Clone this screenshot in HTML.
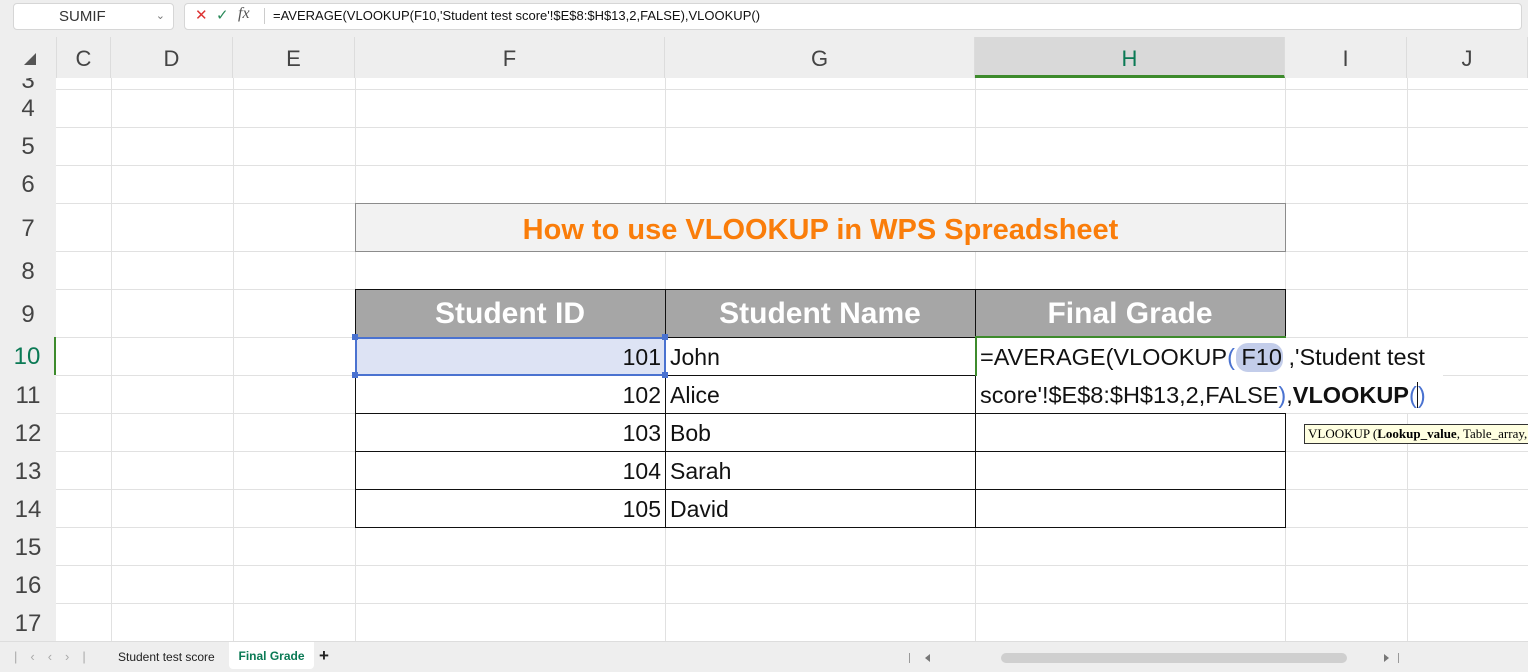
<!DOCTYPE html>
<html><head><meta charset="utf-8"><style>
*{margin:0;padding:0;box-sizing:border-box}
body{width:1528px;height:672px;overflow:hidden;background:#eeeeee;font-family:"Liberation Sans",sans-serif;position:relative}
.a{position:absolute}
.vl{position:absolute;top:78px;height:563px;width:1px;background:#e1e1e1}
.hl{position:absolute;left:56px;width:1472px;height:1px;background:#e1e1e1}
.rh{position:absolute;left:0;width:56px;text-align:center;font-size:24px;color:#444}
.ch{position:absolute;top:37px;height:41px;line-height:43px;text-align:center;font-size:22px;color:#444;border-right:1px solid #dcdcdc}
.c{position:absolute;font-size:23px;color:#111;white-space:nowrap}
</style></head><body>
<div class="a" style="left:13px;top:3px;width:161px;height:27px;background:#fff;border:1px solid #d6d6d6;border-radius:4px;font-size:15px;color:#333;line-height:25px;padding-left:45px">SUMIF<span style="position:absolute;right:8px;top:0;font-size:11px;color:#777">&#8964;</span></div>
<div class="a" style="left:184px;top:3px;width:1338px;height:27px;background:#fff;border:1px solid #d6d6d6;border-radius:4px"></div>
<div class="a" style="left:195px;top:6px;font-size:15px;color:#d33">✕</div>
<div class="a" style="left:216px;top:6px;font-size:15px;color:#2a8a5a">✓</div>
<div class="a" style="left:238px;top:5px;font-size:16px;color:#555;font-style:italic;font-family:'Liberation Serif',serif">fx</div>
<div class="a" style="left:264px;top:8px;width:1px;height:16px;background:#ccc"></div>
<div class="a" style="left:273px;top:8px;font-size:13px;color:#111">=AVERAGE(VLOOKUP(F10,'Student test score'!$E$8:$H$13,2,FALSE),VLOOKUP()</div>
<div class="a" style="left:56px;top:78px;width:1472px;height:563px;background:#fff"></div>
<div class="a" style="left:0;top:37px;width:56px;height:41px"><div style="position:absolute;left:24px;top:16px;width:0;height:0;border-left:12px solid transparent;border-bottom:12px solid #555"></div></div>
<div class="ch" style="left:56px;width:55px;border-left:1px solid #dcdcdc">C</div>
<div class="ch" style="left:111px;width:122px">D</div>
<div class="ch" style="left:233px;width:122px">E</div>
<div class="ch" style="left:355px;width:310px">F</div>
<div class="ch" style="left:665px;width:310px">G</div>
<div class="ch" style="left:975px;width:310px;background:#d9d9d9;color:#0b7a55;border-bottom:3px solid #3d8b2c">H</div>
<div class="ch" style="left:1285px;width:122px">I</div>
<div class="ch" style="left:1407px;width:121px">J</div>
<div class="vl" style="left:111px"></div><div class="vl" style="left:233px"></div><div class="vl" style="left:355px"></div><div class="vl" style="left:665px"></div><div class="vl" style="left:975px"></div><div class="vl" style="left:1285px"></div><div class="vl" style="left:1407px"></div>
<div class="hl" style="top:89px"></div><div class="hl" style="top:127px"></div><div class="hl" style="top:165px"></div><div class="hl" style="top:203px"></div><div class="hl" style="top:251px"></div><div class="hl" style="top:289px"></div><div class="hl" style="top:337px"></div><div class="hl" style="top:375px"></div><div class="hl" style="top:413px"></div><div class="hl" style="top:451px"></div><div class="hl" style="top:489px"></div><div class="hl" style="top:527px"></div><div class="hl" style="top:565px"></div><div class="hl" style="top:603px"></div><div class="hl" style="top:641px"></div>
<div class="rh" style="top:78px;height:11px;overflow:hidden;line-height:22px;font-size:24px"><span style="position:relative;top:-8px">3</span></div>
<div class="rh" style="top:89px;line-height:40px">4</div>
<div class="rh" style="top:127px;line-height:40px">5</div>
<div class="rh" style="top:165px;line-height:40px">6</div>
<div class="rh" style="top:203px;line-height:52px">7</div>
<div class="rh" style="top:251px;line-height:42px">8</div>
<div class="rh" style="top:289px;line-height:52px">9</div>
<div class="rh" style="top:337px;line-height:40px;color:#0b7a55;height:38px;border-right:2px solid #3d8b2c">10</div>
<div class="rh" style="top:375px;line-height:42px">11</div>
<div class="rh" style="top:413px;line-height:42px">12</div>
<div class="rh" style="top:451px;line-height:42px">13</div>
<div class="rh" style="top:489px;line-height:42px">14</div>
<div class="rh" style="top:527px;line-height:42px">15</div>
<div class="rh" style="top:565px;line-height:42px">16</div>
<div class="rh" style="top:603px;line-height:42px">17</div>
<div class="a" style="left:355px;top:203px;width:931px;height:49px;background:#f2f2f2;border:1px solid #8c8c8c;text-align:center;line-height:52px;font-size:29px;font-weight:bold;color:#fa7d0a">How to use VLOOKUP in WPS Spreadsheet</div>
<div class="a" style="left:355px;top:289px;width:931px;height:49px;background:#a6a6a6;border:1px solid #111"></div>
<div class="a" style="left:665px;top:289px;width:1px;height:239px;background:#111"></div>
<div class="a" style="left:975px;top:289px;width:1px;height:239px;background:#111"></div>
<div class="c" style="left:355px;top:297px;width:310px;text-align:center;color:#fff;font-weight:bold;font-size:30px">Student ID</div>
<div class="c" style="left:665px;top:297px;width:310px;text-align:center;color:#fff;font-weight:bold;font-size:30px">Student Name</div>
<div class="c" style="left:975px;top:297px;width:310px;text-align:center;color:#fff;font-weight:bold;font-size:30px">Final Grade</div>
<div class="a" style="left:355px;top:337px;width:1px;height:191px;background:#111"></div>
<div class="a" style="left:1285px;top:413px;width:1px;height:115px;background:#111"></div>
<div class="a" style="left:665px;top:375px;width:311px;height:1px;background:#111"></div>
<div class="a" style="left:355px;top:413px;width:931px;height:1px;background:#111"></div>
<div class="a" style="left:355px;top:451px;width:931px;height:1px;background:#111"></div>
<div class="a" style="left:355px;top:489px;width:931px;height:1px;background:#111"></div>
<div class="a" style="left:355px;top:527px;width:931px;height:1px;background:#111"></div>
<div class="a" style="left:355px;top:375px;width:310px;height:1px;background:#111"></div>
<div class="a" style="left:355px;top:337px;width:311px;height:39px;background:#dde3f4;border:2px solid #4a72d0"></div>
<div class="a" style="left:352px;top:334px;width:6px;height:6px;background:#4a72d0"></div>
<div class="a" style="left:662px;top:334px;width:6px;height:6px;background:#4a72d0"></div>
<div class="a" style="left:352px;top:372px;width:6px;height:6px;background:#4a72d0"></div>
<div class="a" style="left:662px;top:372px;width:6px;height:6px;background:#4a72d0"></div>
<div class="c" style="left:355px;top:344px;width:306px;text-align:right">101</div>
<div class="c" style="left:355px;top:382px;width:306px;text-align:right">102</div>
<div class="c" style="left:355px;top:420px;width:306px;text-align:right">103</div>
<div class="c" style="left:355px;top:458px;width:306px;text-align:right">104</div>
<div class="c" style="left:355px;top:496px;width:306px;text-align:right">105</div>
<div class="c" style="left:670px;top:344px">John</div>
<div class="c" style="left:670px;top:382px">Alice</div>
<div class="c" style="left:670px;top:420px">Bob</div>
<div class="c" style="left:670px;top:458px">Sarah</div>
<div class="c" style="left:670px;top:496px">David</div>
<div class="a" style="left:975px;top:336px;width:311px;height:2px;background:#3d8b2c"></div>
<div class="a" style="left:975px;top:336px;width:2px;height:40px;background:#3d8b2c"></div>
<div class="a" style="left:977px;top:338px;width:466px;height:75px;background:#fff"></div>
<div class="a" style="left:1236px;top:343px;width:47px;height:29px;background:#c3cdea;border-radius:12px"></div>
<div class="c" style="left:980px;top:344px;font-size:23.5px">=AVERAGE(VLOOKUP<span style="color:#4a72d0">(</span> F10 ,'Student test</div>
<div class="c" style="left:980px;top:382px;font-size:23.5px">score'!$E$8:$H$13,2,FALSE<span style="color:#4a72d0">)</span>,<b>VLOOKUP</b><span style="color:#4a72d0">(</span><span style="border-left:1px solid #111"></span><span style="color:#4a72d0">)</span></div>
<div class="a" style="left:975px;top:413px;width:1px;height:115px;background:#111"></div>
<div class="a" style="left:1304px;top:424px;width:230px;height:20px;background:#ffffe1;border:1px solid #333;font-family:'Liberation Serif',serif;font-size:13px;line-height:18px;padding-left:3px;white-space:nowrap;overflow:hidden">VLOOKUP (<b>Lookup_value</b>, Table_array, Col_index_num</div>
<div class="a" style="left:0;top:641px;width:1528px;height:31px;background:#eeeeee;border-top:1px solid #ddd"></div>
<div class="a" style="left:14px;top:649px;font-size:13px;color:#aaa;letter-spacing:13px">|‹‹›|</div>
<div class="a" style="left:118px;top:650px;font-size:12px;color:#222">Student test score</div>
<div class="a" style="left:229px;top:642px;width:85px;height:27px;background:#fff;border-radius:0 0 4px 4px;text-align:center;line-height:29px;font-size:12px;font-weight:bold;color:#0b7a55">Final Grade</div>
<div class="a" style="left:319px;top:646px;font-size:17px;font-weight:bold;color:#222">+</div>
<div class="a" style="left:909px;top:653px;width:1px;height:10px;background:#999"></div>
<div class="a" style="left:925px;top:654px;width:0;height:0;border-top:4px solid transparent;border-bottom:4px solid transparent;border-right:5px solid #777"></div>
<div class="a" style="left:1001px;top:653px;width:346px;height:10px;background:#cfcfcf;border-radius:5px"></div>
<div class="a" style="left:1384px;top:654px;width:0;height:0;border-top:4px solid transparent;border-bottom:4px solid transparent;border-left:5px solid #777"></div>
<div class="a" style="left:1398px;top:653px;width:1px;height:10px;background:#999"></div>
</body></html>
